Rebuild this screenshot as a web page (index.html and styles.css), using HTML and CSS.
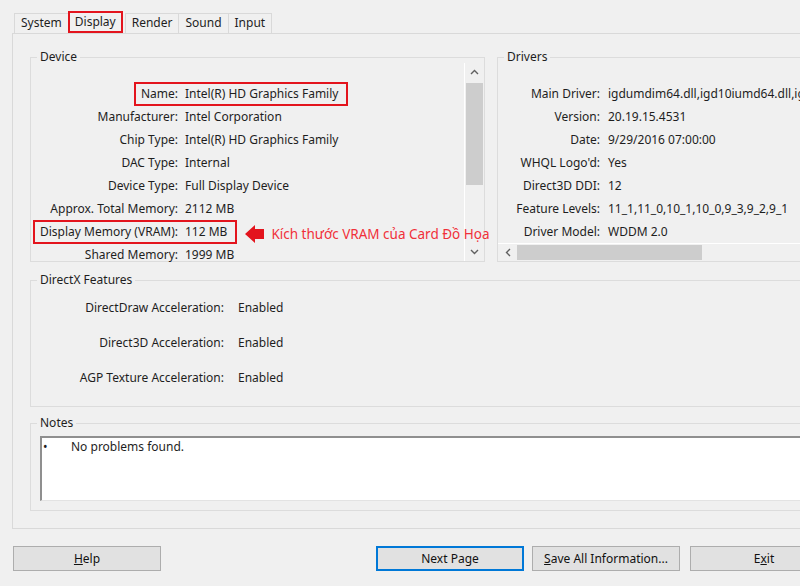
FILE: index.html
```html
<!DOCTYPE html>
<html>
<head>
<meta charset="UTF-8">
<meta name="viewport" content="width=device-width, initial-scale=1">
<title>DirectX Diagnostic Tool - Display</title>
<link rel="stylesheet" href="styles.css">
</head>
<body>
<div class="dialog">
	<div class="tabs">
		<span class="tab">System</span>
		<span class="tab tab-on">Display</span>
		<span class="tab">Render</span>
		<span class="tab">Sound</span>
		<span class="tab">Input</span>
	</div>
	<div class="panel">
		<div class="top-row">
			<!-- Device -->
			<fieldset class="group group-device">
				<legend>Device</legend>
				<div class="group-body">
					<div class="rows">
						<div class="row"><span class="k"><span class="mark-l">Name:</span></span><span class="v"><span class="mark-r">Intel(R) HD Graphics Family</span></span></div>
						<div class="row"><span class="k"><span>Manufacturer:</span></span><span class="v">Intel Corporation</span></div>
						<div class="row"><span class="k"><span>Chip Type:</span></span><span class="v">Intel(R) HD Graphics Family</span></div>
						<div class="row"><span class="k"><span>DAC Type:</span></span><span class="v">Internal</span></div>
						<div class="row"><span class="k"><span>Device Type:</span></span><span class="v">Full Display Device</span></div>
						<div class="row"><span class="k"><span>Approx. Total Memory:</span></span><span class="v">2112 MB</span></div>
						<div class="row"><span class="k"><span class="mark-l">Display Memory (VRAM):</span></span><span class="v"><span class="mark-r">112 MB</span></span>
							<span class="note">
								<svg width="19" height="18" viewBox="0 0 19 18"><polygon points="0,9 10,0 10,4 19,4 19,14 10,14 10,18" fill="#e3141d"/></svg>
								Kích thước VRAM của Card Đồ Họa
							</span>
						</div>
						<div class="row"><span class="k"><span>Shared Memory:</span></span><span class="v">1999 MB</span></div>
					</div>
					<div class="vscroll">
						<div class="sb-btn"><svg width="9" height="6" viewBox="0 0 9 6"><polyline points="1,5 4.5,1.5 8,5" fill="none" stroke="#606060" stroke-width="1.4"/></svg></div>
						<div class="sb-thumb"></div>
						<div class="sb-space"></div>
						<div class="sb-btn"><svg width="9" height="6" viewBox="0 0 9 6"><polyline points="1,1 4.5,4.5 8,1" fill="none" stroke="#606060" stroke-width="1.4"/></svg></div>
					</div>
				</div>
			</fieldset>
			<!-- Drivers -->
			<fieldset class="group group-drivers">
				<legend>Drivers</legend>
				<div class="group-body">
					<div class="rows">
						<div class="row"><span class="k"><span>Main Driver:</span></span><span class="v">igdumdim64.dll,igd10iumd64.dll,igd10iumd64.dll,igd12umd64.dll</span></div>
						<div class="row"><span class="k"><span>Version:</span></span><span class="v">20.19.15.4531</span></div>
						<div class="row"><span class="k"><span>Date:</span></span><span class="v">9/29/2016 07:00:00</span></div>
						<div class="row"><span class="k"><span>WHQL Logo'd:</span></span><span class="v">Yes</span></div>
						<div class="row"><span class="k"><span>Direct3D DDI:</span></span><span class="v">12</span></div>
						<div class="row"><span class="k"><span>Feature Levels:</span></span><span class="v">11_1,11_0,10_1,10_0,9_3,9_2,9_1</span></div>
						<div class="row"><span class="k"><span>Driver Model:</span></span><span class="v">WDDM 2.0</span></div>
					</div>
					<div class="hscroll">
						<div class="sb-btn"><svg width="6" height="9" viewBox="0 0 6 9"><polyline points="5,1 1.5,4.5 5,8" fill="none" stroke="#606060" stroke-width="1.4"/></svg></div>
						<div class="sb-thumb"></div>
					</div>
				</div>
			</fieldset>
		</div>
		<!-- DirectX Features -->
		<fieldset class="group group-dx">
			<legend>DirectX Features</legend>
			<div class="rows">
				<div class="row"><span class="k"><span>DirectDraw Acceleration:</span></span><span class="v">Enabled</span></div>
				<div class="row"><span class="k"><span>Direct3D Acceleration:</span></span><span class="v">Enabled</span></div>
				<div class="row"><span class="k"><span>AGP Texture Acceleration:</span></span><span class="v">Enabled</span></div>
			</div>
		</fieldset>
		<!-- Notes -->
		<fieldset class="group group-notes">
			<legend>Notes</legend>
			<div class="notes-box">
				<span class="bullet">•</span>
				<span>No problems found.</span>
			</div>
		</fieldset>
	</div>
	<div class="buttons">
		<button class="btn btn-help"><u>H</u>elp</button>
		<button class="btn btn-def">Next Page</button>
		<button class="btn btn-save"><u>S</u>ave All Information...</button>
		<button class="btn btn-exit">E<u>x</u>it</button>
	</div>
</div>
</body>
</html>
```

FILE: styles.css
```css
*{
	margin:0;
	padding:0;
	box-sizing:border-box;
}
body{
	width:800px;
	height:586px;
	overflow:hidden;
	background:#f0f0f0;
	font-family:"Noto Sans","Liberation Sans",sans-serif;
	font-size:12px;
	color:#1e1e1e;
}
.dialog{
	width:852px;
	padding:11px 0 0 12px;
}
/* tabs */
.tabs{
	display:flex;
	align-items:flex-end;
	height:22px;
	padding-left:2px;
}
.tab{
	height:20px;
	line-height:18px;
	padding:0 6px;
	border:1px solid #d9d9d9;
	border-bottom:none;
	margin-right:-1px;
	background:#f0f0f0;
}
.tab-on{
	height:22px;
	line-height:17px;
	padding:0 5px;
	border:2px solid #e3141d;
	margin-right:2px;
	position:relative;
	z-index:1;
}
.panel{
	height:496px; /* y 33 -> 529 */
	border:1px solid #d9d9d9;
	padding:16px 17px 0 17px;
}
/* group boxes */
.group{
	border:1px solid #dcdcdc;
	min-width:0;
}
.group legend{
	margin-left:6px;
	padding:0 3px;
	line-height:14px;
}
.top-row{
	display:flex;
	gap:12px;
}
.group-device,
.group-drivers{
	height:212px;
}
.group-device{
	width:455px;
	flex:none;
}
.group-drivers{
	flex:1;
}
.group-body{
	height:197px;
	display:flex;
}
.group-drivers .group-body{
	flex-direction:column;
}
.rows{
	flex:1;
	min-width:0;
	padding-top:18px;
}
.row{
	display:flex;
	align-items:center;
	height:23px;
	white-space:nowrap;
}
.k{
	flex:none;
	text-align:right;
}
.k > span{
	display:inline-block;
	padding-right:7px;
}
.v{
	flex:none;
}
.group-device .k{
	width:154px;
}
.group-drivers .k{
	width:110px;
}
.group-drivers .k > span{
	padding-right:8px;
}
/* red marks drawn on the screenshot */
.mark-l,
.mark-r{
	display:inline-block;
	line-height:20px;
	border:2px solid #e3141d;
}
.mark-l{
	border-right:none;
	padding-left:5px;
}
.mark-r{
	border-left:none;
	padding-right:8px;
}
.note{
	display:flex;
	align-items:center;
	gap:7px;
	margin-left:8px;
	color:#f0303a;
	font-size:13.5px;
	position:relative; /* above the scrollbar */
	top:2px;
	z-index:2;
}
/* scrollbars */
.vscroll{
	flex:none;
	width:20px;
	height:198px;
	margin-top:-1px;
	border-left:1px solid #fff;
	display:flex;
	flex-direction:column;
}
.sb-btn{
	flex:none;
	height:18px;
	display:flex;
	align-items:center;
	justify-content:center;
}
.vscroll .sb-thumb{
	height:102px;
	margin:2px 1px 0 1px;
	background:#cdcdcd;
}
.sb-space{
	flex:1;
}
.hscroll{
	flex:none;
	height:18px;
	margin-bottom:1px;
	border-top:1px solid #fff;
	display:flex;
}
.hscroll .sb-btn{
	width:19px;
	height:auto;
}
.hscroll .sb-thumb{
	width:185px;
	margin:1px 0 1px 0;
	background:#cdcdcd;
}
/* DirectX Features */
.group-dx{
	height:134px;
	margin-top:11px;
}
.group-dx .rows{
	padding-top:3px;
}
.group-dx .row{
	height:35px;
}
.group-dx .k{
	width:207px;
}
.group-dx .k > span{
	padding-right:14px;
}
/* Notes */
.group-notes{
	height:95px;
	margin-top:9px;
}
.notes-box{
	height:65px;
	margin:6px 0 0 9px;
	background:#fff;
	border-top:2px solid #8f8f8f;
	border-left:2px solid #8f8f8f;
	border-right:1px solid #e3e3e3;
	border-bottom:1px solid #e3e3e3;
	padding-left:1px;
	line-height:18px;
	display:flex;
}
.bullet{
	width:28px;
}
/* buttons */
.buttons{
	display:flex;
	margin-top:17px;
}
.btn{
	width:148px;
	height:25px;
	border:1px solid #adadad;
	background:#e1e1e1;
	font-family:inherit;
	font-size:12px;
	color:#111;
}
.btn-help{
	margin-left:1px;
}
.btn-def{
	margin-left:215px;
	border:2px solid #0078d7;
}
.btn-save{
	margin-left:8px;
}
.btn-exit{
	margin-left:10px;
}
```
